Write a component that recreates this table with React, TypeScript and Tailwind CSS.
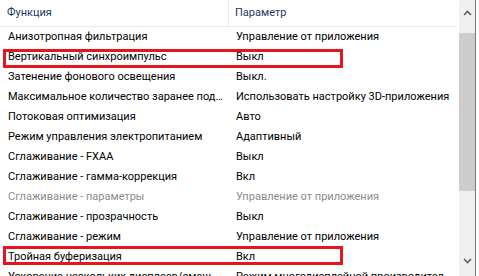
import React from "react";

const rows: { a: string; b: string; dim?: boolean }[] = [
  { a: "Анизотропная фильтрация", b: "Управление от приложения" },
  { a: "Вертикальный синхроимпульс", b: "Выкл" },
  { a: "Затенение фонового освещения", b: "Выкл." },
  { a: "Максимальное количество заранее подготовленных кадров", b: "Использовать настройку 3D-приложения" },
  { a: "Потоковая оптимизация", b: "Авто" },
  { a: "Режим управления электропитанием", b: "Адаптивный" },
  { a: "Сглаживание - FXAA", b: "Выкл" },
  { a: "Сглаживание - гамма-коррекция", b: "Вкл" },
  { a: "Сглаживание - параметры", b: "Управление от приложения", dim: true },
  { a: "Сглаживание - прозрачность", b: "Выкл" },
  { a: "Сглаживание - режим", b: "Управление от приложения" },
  { a: "Тройная буферизация", b: "Вкл" },
  { a: "Ускорение нескольких дисплеев/смешанных ГП", b: "Режим многодисплейной производительности" },
];

export default function App() {
  return (
    <div
      className="relative w-[479px] h-[276px] overflow-hidden bg-white flex text-[11px] text-black"
      style={{ fontFamily: 'Roboto, sans-serif' }}
    >
      <div className="w-[457px] flex flex-col">
        <div className="h-[27px] flex border-b border-[#e5ebf3] text-[#1e395b] shrink-0">
          <div className="w-[229px] border-r border-[#e5ebf3] pl-[7px] flex items-center">Функция</div>
          <div className="flex-1 pl-[6px] flex items-center">Параметр</div>
        </div>
        {rows.map((r, i) => (
          <div key={i} className={`h-[20px] flex items-center shrink-0 ${r.dim ? "text-[#8c8c8c]" : ""}`}>
            <div className="w-[229px] pl-[8px] pr-[6px] whitespace-nowrap overflow-hidden text-ellipsis">{r.a}</div>
            <div className="w-[228px] pl-[7px] pr-[2px] whitespace-nowrap overflow-hidden text-ellipsis">{r.b}</div>
          </div>
        ))}
      </div>
      <div className="ml-[2px] w-[16px] bg-[#f0f0f0] flex flex-col">
        <div className="h-[25px] flex items-center justify-center">
          <svg width="9" height="6" viewBox="0 0 9 6"><path d="M1 5 L4.5 1.5 L8 5" stroke="#606060" strokeWidth="1.6" fill="none" /></svg>
        </div>
        <div className="mt-[8px] h-[158px] bg-[#cdcdcd]" />
        <div className="flex-1" />
        <div className="h-[24px] flex items-start justify-center pt-[6px]">
          <svg width="9" height="6" viewBox="0 0 9 6"><path d="M1 1 L4.5 4.5 L8 1" stroke="#606060" strokeWidth="1.6" fill="none" /></svg>
        </div>
      </div>
      <div className="w-[1px] bg-[#7a7a7a]" />
      <div className="flex-1 bg-white" />
      <div className="absolute left-[3px] top-[49px] w-[340px] h-[19px] border-[3px] border-[#e8141c]" />
      <div className="absolute left-[3px] top-[246px] w-[340px] h-[19px] border-[3px] border-[#e8141c]" />
    </div>
  );
}
